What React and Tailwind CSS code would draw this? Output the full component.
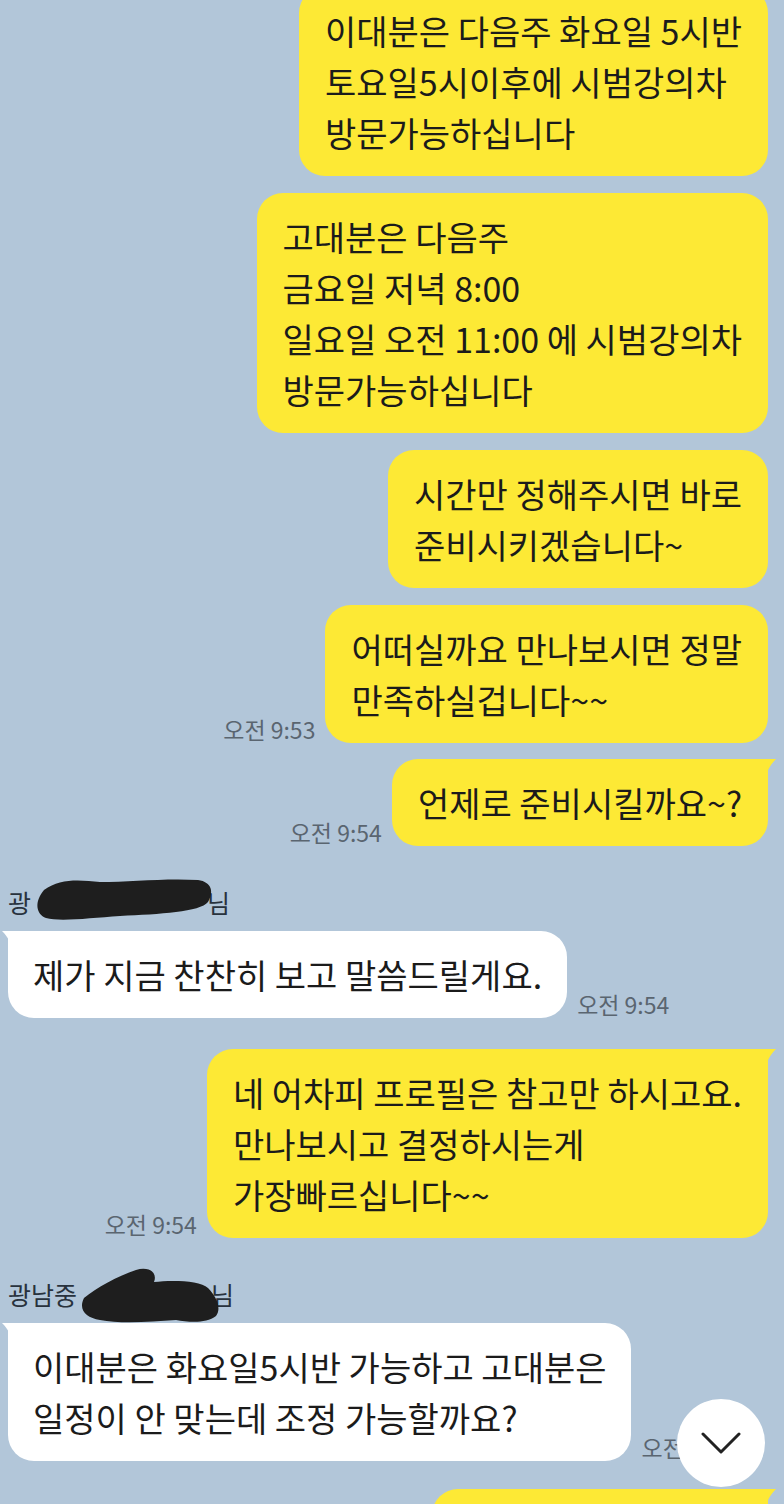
import React from "react";

const font = { fontFamily: '"Noto Sans CJK KR", "Noto Sans", sans-serif' };

const TailRight = ({ color }) => (
  <svg className="absolute -right-[8px] top-0" width="22" height="22" viewBox="0 0 22 22">
    <path d="M0 0 H22 C18 4 15 8 12 16 L0 22 Z" fill={color} />
  </svg>
);

const TailLeft = ({ color }) => (
  <svg className="absolute -left-[6px] top-0" width="22" height="22" viewBox="0 0 22 22">
    <path d="M22 0 H0 C4 4 7 8 10 16 L22 22 Z" fill={color} />
  </svg>
);

const Time = ({ children }) => (
  <span className="text-[23px] leading-none text-[#5a6570] whitespace-nowrap pb-[2px]">
    {children}
  </span>
);

const Mine = ({ lines, time, tail, className = "" }) => (
  <div className={`flex items-end justify-end gap-[10px] ${className}`}>
    {time && <Time>{time}</Time>}
    <div className="relative">
      {tail && <TailRight color="#fde935" />}
      <div
        className={`relative bg-[#fde935] rounded-[26px] px-[26px] py-[18px] text-[34px] leading-[51px] text-[#1b1b1b] whitespace-nowrap ${
          tail ? "rounded-tr-[8px]" : ""
        }`}
      >
        {lines.map((l, i) => (
          <div key={i}>{l}</div>
        ))}
      </div>
    </div>
  </div>
);

const Theirs = ({ lines, time, className = "" }) => (
  <div className={`flex items-end gap-[10px] ${className}`}>
    <div className="relative">
      <TailLeft color="#ffffff" />
      <div className="relative bg-white rounded-[26px] rounded-tl-[8px] px-[25px] py-[18px] text-[34px] leading-[51px] text-[#1b1b1b] whitespace-nowrap">
        {lines.map((l, i) => (
          <div key={i}>{l}</div>
        ))}
      </div>
    </div>
    {time && <Time>{time}</Time>}
  </div>
);

const Blob = ({ d, className }) => (
  <svg className={`absolute ${className}`} width="240" height="80" viewBox="0 0 240 80">
    <path d={d} fill="#1e1e1e" />
  </svg>
);

const Name = ({ first, last, gap, blob }) => (
  <div className="relative flex items-center h-[30px] text-[25px] leading-[30px] text-[#28323d] ml-[8px]">
    <span>{first}</span>
    <span style={{ width: gap }} />
    <span>{last}</span>
    <Blob d={blob} className="-left-[8px] -top-[25px]" />
  </div>
);

export default function App() {
  return (
    <div
      className="w-[784px] h-[1504px] overflow-hidden bg-[#b2c6d9] relative"
      style={font}
    >
      <div className="flex flex-col pl-[8px] pr-[16px] -mt-[13px]">
        <Mine lines={["이대분은 다음주 화요일 5시반", "토요일5시이후에 시범강의차", "방문가능하십니다"]} />
        <Mine
          className="mt-[17px]"
          lines={["고대분은 다음주", "금요일 저녁 8:00", "일요일 오전 11:00 에 시범강의차", "방문가능하십니다"]}
        />
        <Mine className="mt-[17px]" lines={["시간만 정해주시면 바로", "준비시키겠습니다~"]} />
        <Mine
          className="mt-[17px]"
          time="오전 9:53"
          lines={["어떠실까요 만나보시면 정말", "만족하실겁니다~~"]}
        />
        <Mine className="mt-[16px]" time="오전 9:54" tail lines={["언제로 준비시킬까요~?"]} />

        <div className="mt-[41px] -ml-[8px]">
          <Name
            first="광"
            last="님"
            gap={176}
            blob="M44 28 C60 16 80 18 100 20 C130 20 165 16 198 18 C212 20 214 30 208 40 C200 50 160 52 120 54 C90 56 60 60 46 56 C36 52 34 40 44 28 Z"
          />
        </div>
        <Theirs className="mt-[14px]" time="오전 9:54" lines={["제가 지금 찬찬히 보고 말씀드릴게요."]} />

        <div className="h-[31px]" />
        <Mine
          time="오전 9:54"
          tail
          lines={["네 어차피 프로필은 참고만 하시고요.", "만나보시고 결정하시는게", "가장빠르십니다~~"]}
        />

        <div className="mt-[41px] -ml-[8px]">
          <Name
            first="광남중"
            last="님"
            gap={134}
            blob="M84 44 C96 34 118 22 136 16 C148 12 158 18 154 28 C170 26 200 26 208 34 C216 42 222 54 216 62 C206 70 188 68 176 66 C150 68 120 70 100 66 C86 64 78 56 84 44 Z"
          />
        </div>
        <Theirs
          className="mt-[14px]"
          time="오전 10:00"
          lines={["이대분은 화요일5시반 가능하고 고대분은", "일정이 안 맞는데 조정 가능할까요?"]}
        />

        <div className="flex justify-end mt-[28px]">
          <div className="relative">
            <TailRight color="#fde935" />
            <div className="relative w-[336px] h-[86px] bg-[#fde935] rounded-[26px] rounded-tr-[8px]" />
          </div>
        </div>
      </div>

      <div className="absolute left-[677px] top-[1399px] w-[88px] h-[88px] rounded-full bg-white flex items-center justify-center">
        <svg width="40" height="24" viewBox="0 0 40 24">
          <path d="M2 3 L20 21 L38 3" fill="none" stroke="#222" strokeWidth="3" strokeLinecap="round" strokeLinejoin="round" />
        </svg>
      </div>
    </div>
  );
}
